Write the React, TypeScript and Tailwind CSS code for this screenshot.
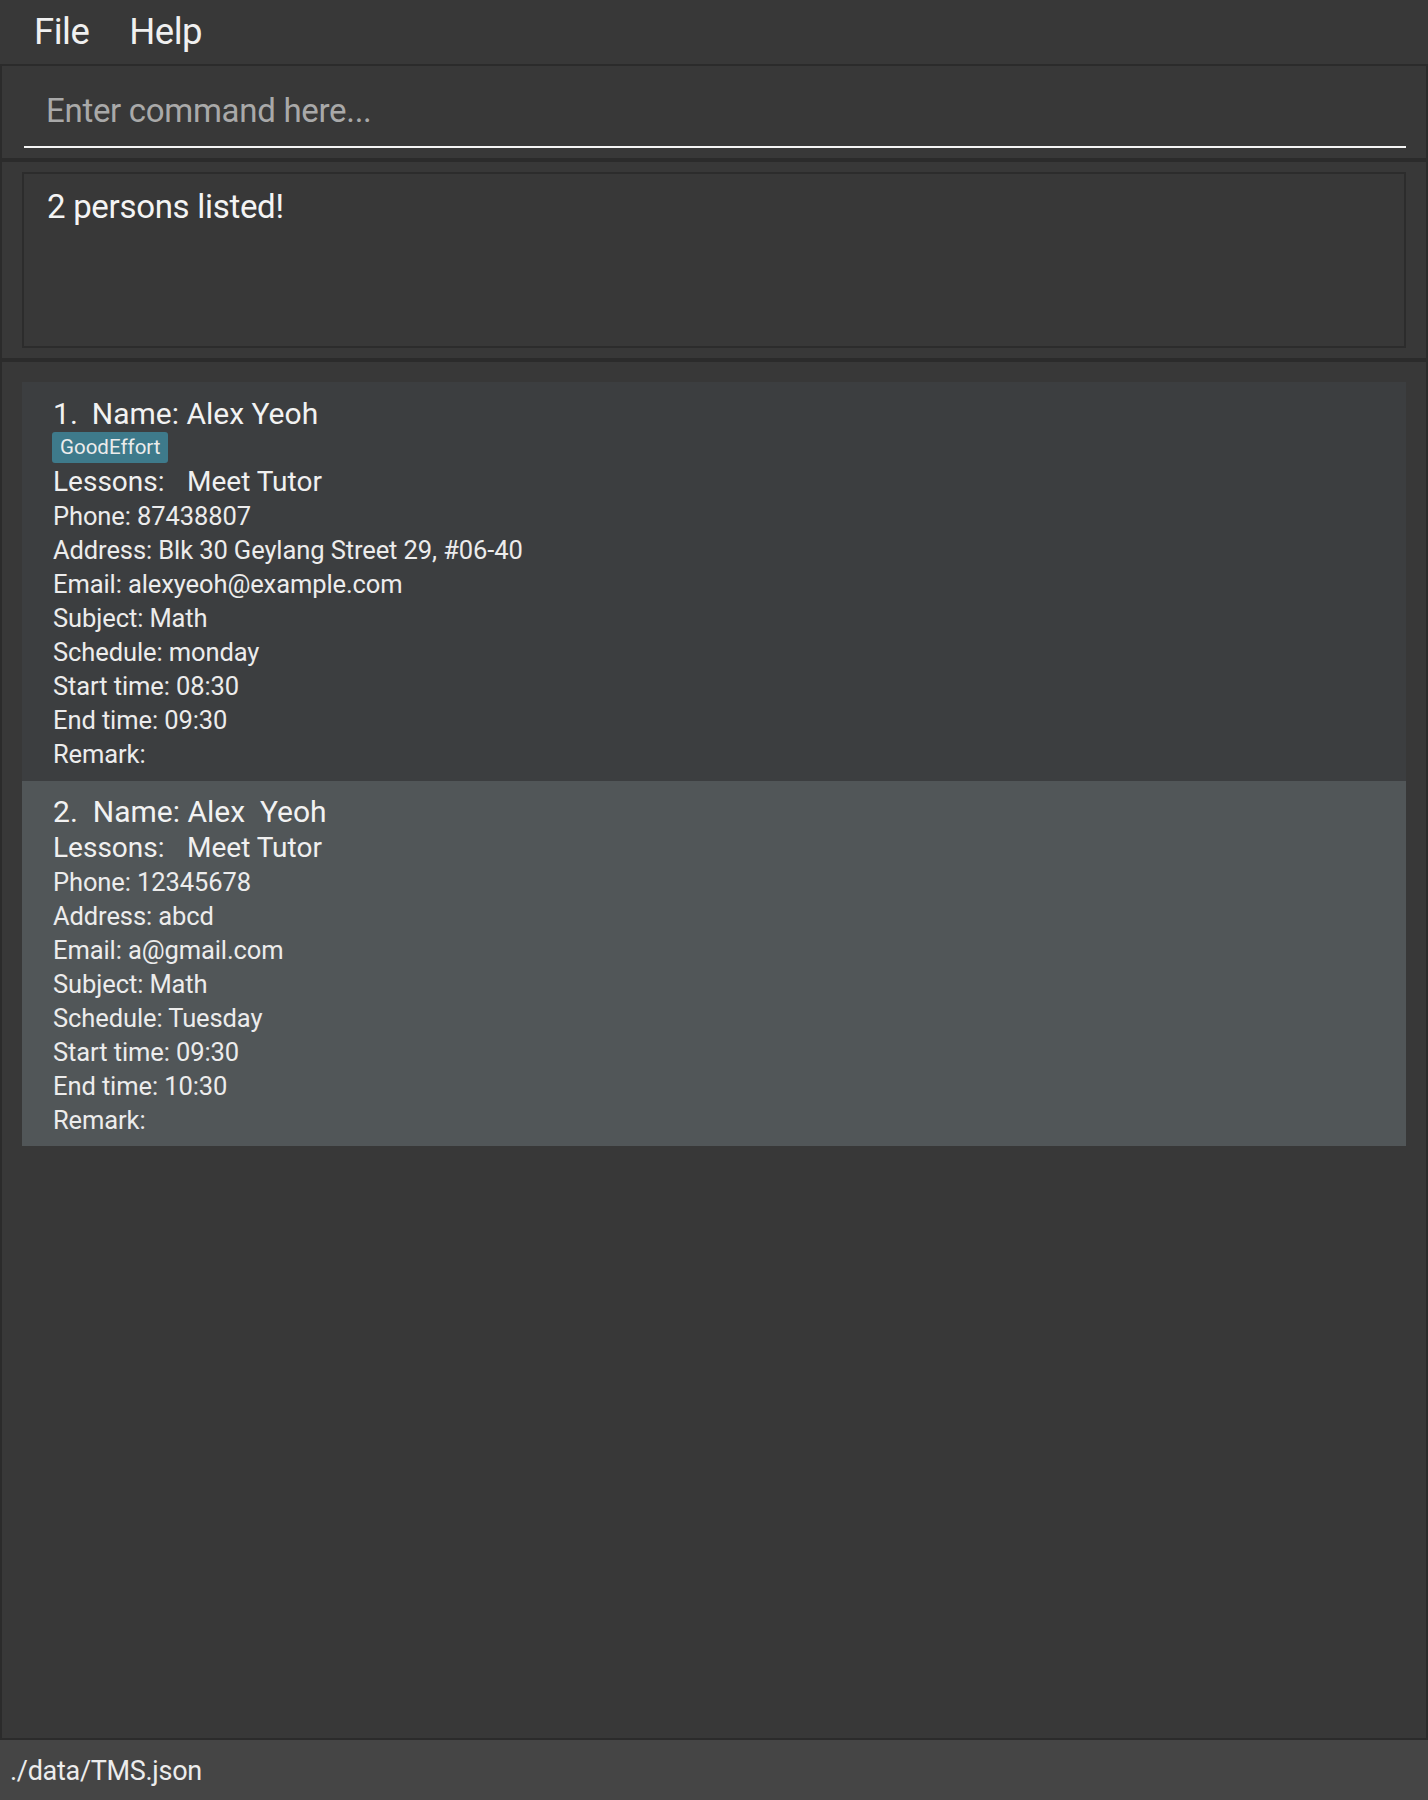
import React from "react";

type Person = {
  id: number;
  name: string;
  tags: string[];
  phone: string;
  address: string;
  email: string;
  subject: string;
  schedule: string;
  start: string;
  end: string;
};

const people: Person[] = [
  {
    id: 1,
    name: "Alex Yeoh",
    tags: ["GoodEffort"],
    phone: "87438807",
    address: "Blk 30 Geylang Street 29, #06-40",
    email: "alexyeoh@example.com",
    subject: "Math",
    schedule: "monday",
    start: "08:30",
    end: "09:30",
  },
  {
    id: 2,
    name: "Alex  Yeoh",
    tags: [],
    phone: "12345678",
    address: "abcd",
    email: "a@gmail.com",
    subject: "Math",
    schedule: "Tuesday",
    start: "09:30",
    end: "10:30",
  },
];

function Card({ p, selected }: { p: Person; selected: boolean }) {
  const rows = [
    `Phone: ${p.phone}`,
    `Address: ${p.address}`,
    `Email: ${p.email}`,
    `Subject: ${p.subject}`,
    `Schedule: ${p.schedule}`,
    `Start time: ${p.start}`,
    `End time: ${p.end}`,
    `Remark:`,
  ];
  return (
    <div
      className={
        "flex flex-col pl-[31px] text-[#ececec] " +
        (selected ? "bg-[#515658] pt-[12px] pb-[9px]" : "bg-[#3c3e40] pt-[13px] pb-[10px]")
      }
    >
      <div className="h-[36px] flex items-center text-[30px] whitespace-pre text-[#f2f2f2]">
        <span>{p.id}.</span>
        <span className={selected ? "ml-[15px]" : "ml-[14px]"}>Name: {p.name}</span>
      </div>
      {p.tags.length > 0 && (
        <div className="flex gap-[6px] mt-[1px] ml-[-1px]">
          {p.tags.map((t) => (
            <span
              key={t}
              className="h-[31px] px-[8px] flex items-center rounded-[3px] bg-[#3e7a8b] text-[20.5px] text-[#ececec]"
            >
              {t}
            </span>
          ))}
        </div>
      )}
      <div className="h-[34px] mt-[2px] flex items-center text-[28px] text-[#f0f0f0]">
        <span className="inline-block w-[134px]">Lessons:</span>
        <span>Meet Tutor</span>
      </div>
      {rows.map((r) => (
        <div key={r} className="h-[34px] flex items-center text-[25.5px] tracking-[-0.1px]">
          {r}
        </div>
      ))}
    </div>
  );
}

export default function App() {
  return (
    <div
      className="w-[1428px] h-[1800px] flex flex-col bg-[#2b2b2b] overflow-hidden"
      style={{ fontFamily: "Roboto, 'Noto Sans', sans-serif" }}
    >
      {/* Menu bar */}
      <div className="h-[64px] bg-[#383838] flex items-center text-[#f0f0f0] text-[36.5px] tracking-[-0.5px]">
        <span className="ml-[34px]">File</span>
        <span className="ml-[40px]">Help</span>
      </div>

      {/* Command box */}
      <div className="mt-[2px] mx-[2px] h-[92px] bg-[#383838] pl-[22px] pr-[20px]">
        <div className="h-[82px] border-b-2 border-[#f5f5f5] flex items-center pt-[10px] pl-[22px]">
          <span className="text-[33px] text-[#a9a9a9] tracking-[-0.3px]">Enter command here...</span>
        </div>
      </div>

      {/* Result display */}
      <div className="mt-[4px] mx-[2px] h-[196px] bg-[#383838] px-[20px] pt-[10px]">
        <div className="h-[176px] border-2 border-[#2c2c2c] pl-[23px] pt-[14px]">
          <div className="text-[33px] leading-[38px] text-[#f4f4f4] tracking-[-0.3px]">2 persons listed!</div>
        </div>
      </div>

      {/* List panel */}
      <div className="mt-[4px] mx-[2px] flex-1 bg-[#383838] px-[20px] pt-[20px] flex flex-col">
        {people.map((p, i) => (
          <Card key={p.id} p={p} selected={i === 1} />
        ))}
      </div>

      {/* Status bar */}
      <div className="mt-[2px] h-[60px] bg-[#454545] flex items-center pl-[10px] pt-[2px]">
        <span className="text-[27px] text-[#ececec] tracking-[-0.3px]">./data/TMS.json</span>
      </div>
    </div>
  );
}
